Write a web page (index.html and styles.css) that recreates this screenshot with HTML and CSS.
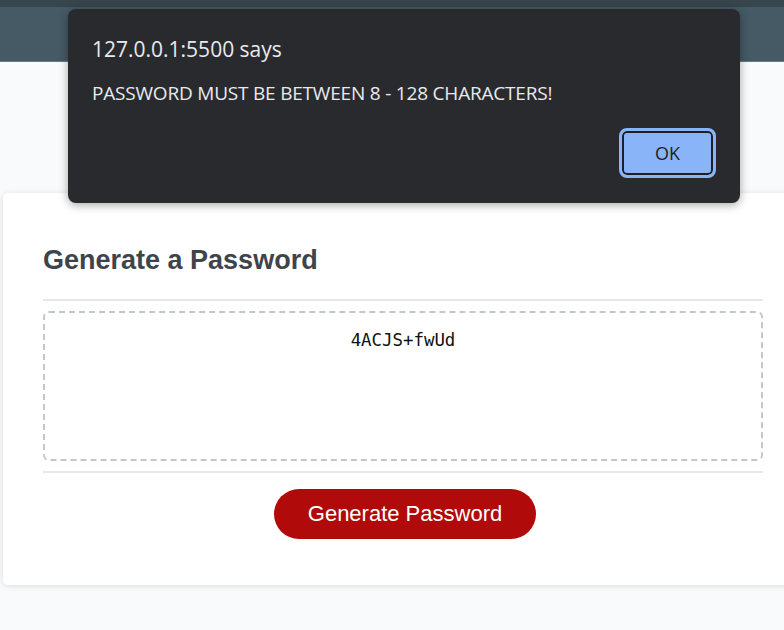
FILE: index.html
```html
<!DOCTYPE html>
<html lang="en">
<head>
<meta charset="utf-8">
<title>Password Generator</title>
<link rel="stylesheet" href="styles.css">
</head>
<body>
  <header class="topbar"></header>
  <main class="wrapper">
    <section class="card">
      <div class="card-header">
        <h2>Generate a Password</h2>
      </div>
      <div class="card-body">
        <textarea readonly class="password" aria-label="Generated Password">4ACJS+fwUd</textarea>
      </div>
      <div class="card-footer">
        <button class="btn">Generate Password</button>
      </div>
    </section>
  </main>

  <div class="dialog" role="alertdialog">
    <div class="dialog-title">127.0.0.1:5500 says</div>
    <div class="dialog-msg">PASSWORD MUST BE BETWEEN 8 - 128 CHARACTERS!</div>
    <div class="dialog-actions">
      <button class="ok">OK</button>
    </div>
  </div>
</body>
</html>
```
FILE: styles.css
```css
* { box-sizing: border-box; }
html, body { margin: 0; padding: 0; }
body {
  background: #f9fafc;
  font-family: "Liberation Sans", Arial, sans-serif;
  width: 784px;
  height: 630px;
  overflow: hidden;
  position: relative;
}
.topbar {
  height: 62px;
  background: #455a64;
  border-top: 7px solid #37454d;
  border-bottom: 1px solid #6a7a82;
}
.wrapper {
  padding: 131px 0 0 3px;
}
.card {
  width: 800px;
  background: #fff;
  border-radius: 5px;
  box-shadow: 0 1px 6px rgba(0,0,0,0.12);
  padding: 0 40px 46px;
}
.card-header {
  padding-top: 50px;
  border-bottom: 2px solid #e8e8e8;
}
.card-header h2 {
  margin: 0 0 22px;
  font-size: 27px;
  font-weight: bold;
  color: #3d444b;
  line-height: 34px;
}
.card-body {
  padding: 10px 0 10px;
  border-bottom: 2px solid #e8e8e8;
}
.password {
  display: block;
  width: 720px;
  height: 150px;
  border: 2px dashed #c0c7cf;
  border-radius: 6px;
  resize: none;
  text-align: center;
  font-family: "DejaVu Sans Mono", monospace;
  font-size: 17.4px;
  color: #111;
  padding: 17px 10px 15px;
  outline: none;
  background: #fff;
}
.card-footer {
  display: flex;
  justify-content: center;
  padding: 16px 0 0 4px;
}
.btn {
  width: 262px;
  height: 50px;
  border: none;
  border-radius: 25px;
  background: #b00a0a;
  color: #fff;
  font-family: "Liberation Sans", Arial, sans-serif;
  font-size: 22px;
}

.dialog {
  position: absolute;
  left: 68px;
  top: 9px;
  width: 672px;
  height: 194px;
  background: #292a2d;
  border-radius: 8px;
  box-shadow: 0 2px 10px rgba(0,0,0,0.35);
  padding: 26px 24px 0;
  color: #e8eaed;
  font-family: "Open Sans", "Noto Sans", sans-serif;
}
.dialog-title {
  font-size: 21px;
  line-height: 28px;
}
.dialog-msg {
  font-size: 19px;
  line-height: 24px;
  margin-top: 18px;
  letter-spacing: -0.2px;
}
.dialog-actions {
  display: flex;
  justify-content: flex-end;
  margin-top: 23px;
}
.ok {
  width: 97px;
  height: 50px;
  border-radius: 8px;
  border: 3px solid #8ab4f8;
  box-shadow: inset 0 0 0 2px #1f2023;
  background: #8ab4f8;
  color: #202124;
  font-family: "Open Sans", "Noto Sans", sans-serif;
  font-size: 18px;
  padding: 0;
}
```
